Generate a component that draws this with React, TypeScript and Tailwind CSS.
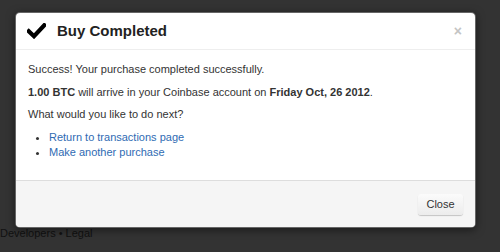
import React from "react";

export default function App() {
  return (
    <div
      className="relative h-[252px] w-[500px] overflow-hidden bg-[#333333]"
      style={{ fontFamily: '"Liberation Sans", Arial, sans-serif' }}
    >
      <div className="pt-[226px] text-[11px] leading-[15px] text-[#111111]">
        Developers • Legal
      </div>

      <div className="absolute left-[15px] top-[12px] w-[461px] overflow-hidden rounded-[5px] border border-black/60 bg-white shadow-[0_2px_8px_rgba(0,0,0,0.5)]">
        <div className="flex h-[37px] items-center border-b border-[#eeeeee] pl-[11px] pr-[13px]">
          <svg width="19" height="16" viewBox="0 0 19 16" className="mr-[11px]">
            <path
              d="M1.8 8.2 L7 13.2 L17.3 2.2"
              fill="none"
              stroke="#000"
              strokeWidth="4.2"
              strokeLinecap="square"
              strokeLinejoin="miter"
            />
          </svg>
          <span className="text-[15px] font-bold text-[#222222]">Buy Completed</span>
          <span className="ml-auto text-[14px] leading-none font-bold text-[#c4c4c4]">×</span>
        </div>

        <div className="h-[130px] px-[12px] pt-[12px] text-[11px] leading-[15px] text-[#333333]">
          <p className="mb-[7.5px]">Success! Your purchase completed successfully.</p>
          <p className="mb-[7.5px]">
            <b>1.00 BTC</b> will arrive in your Coinbase account on <b>Friday Oct, 26 2012</b>.
          </p>
          <p className="mb-[7.5px]">What would you like to do next?</p>
          <ul className="ml-[21px] list-disc text-[#2f6bb3] marker:text-[#333333]">
            <li>Return to transactions page</li>
            <li>Make another purchase</li>
          </ul>
        </div>

        <div className="flex h-[47px] items-center justify-end border-t border-[#dddddd] bg-[#f5f5f5] pr-[12px]">
          <div className="flex h-[21px] w-[45px] items-center justify-center rounded-[3px] bg-gradient-to-b from-[#fbfbfb] to-[#ececec] text-[11px] text-[#333333] shadow-[0_1px_1px_rgba(0,0,0,0.2)]">
            Close
          </div>
        </div>
      </div>
    </div>
  );
}
